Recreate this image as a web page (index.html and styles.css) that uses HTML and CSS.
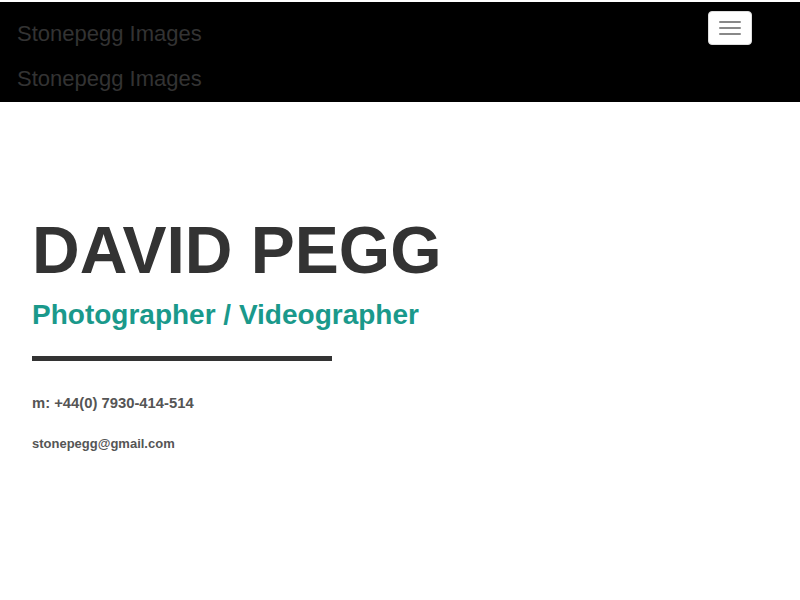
FILE: index.html
```html
<!DOCTYPE html>
<html lang="en">
<head>
    <meta charset="UTF-8">
    <meta name="viewport" content="width=device-width, initial-scale=1.0">
    <title>David Pegg - Stonepegg Images</title>
    <link rel="stylesheet" href="styles.css">
</head>
<body>
    <nav class="navbar">
        <div class="navbar-brands">
            <a class="brand" href="#">Stonepegg Images</a>
            <a class="brand" href="#">Stonepegg Images</a>
        </div>
        <button class="navbar-toggle" type="button">
            <span class="icon-bar"></span>
            <span class="icon-bar"></span>
            <span class="icon-bar"></span>
        </button>
    </nav>

    <section class="intro">
        <h1>DAVID PEGG</h1>
        <h2>Photographer / Videographer</h2>
        <hr class="intro-rule">
        <p class="phone">m: +44(0) 7930-414-514</p>
        <p class="email">stonepegg@gmail.com</p>
    </section>
</body>
</html>
```

FILE: styles.css
```css
body {
    font-family: "Liberation Sans", Arial, sans-serif;
    margin: 0;
    padding: 2px 0 0 0;
    background-color: #fff;
    min-height: 1772px;
}
.navbar {
    background-color: #000;
    height: 100px;
    display: flex;
    justify-content: space-between;
    align-items: flex-start;
    padding: 0 48px 0 17px;
}
.navbar-brands {
    display: flex;
    flex-direction: column;
    padding-top: 9px;
}
.brand {
    color: #333;
    font-size: 22px;
    line-height: 45px;
    text-decoration: none;
}
.navbar-toggle {
    margin-top: 9px;
    width: 44px;
    height: 34px;
    background: #fff;
    border: 1px solid #ddd;
    border-radius: 4px;
    display: flex;
    flex-direction: column;
    align-items: center;
    justify-content: center;
    gap: 4px;
    padding: 0;
}
.icon-bar {
    display: block;
    width: 22px;
    height: 2px;
    background-color: #888;
    border-radius: 1px;
}
.intro {
    padding: 108px 32px 0 32px;
}
.intro h1 {
    margin: 0;
    font-size: 66px;
    line-height: 80px;
    font-weight: bold;
    color: #333;
}
.intro h2 {
    margin: 8px 0 0 0;
    font-size: 28px;
    line-height: 34px;
    font-weight: bold;
    color: #1a998b;
}
.intro-rule {
    width: 300px;
    height: 5px;
    margin: 24px 0 0 0;
    border: 0;
    background-color: #333;
}
.phone {
    margin: 34px 0 0 0;
    font-size: 14.8px;
    font-weight: bold;
    color: #555;
}
.email {
    margin: 25px 0 0 0;
    font-size: 13px;
    font-weight: bold;
    color: #555;
}
```
